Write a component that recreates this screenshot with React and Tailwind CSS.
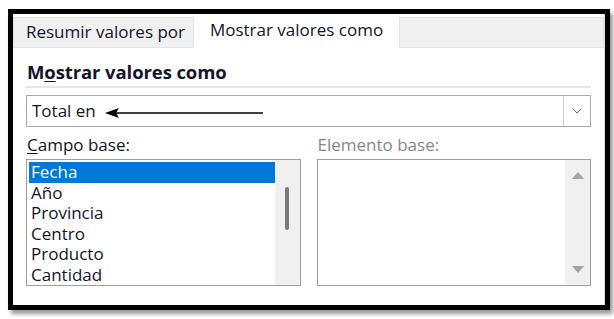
import { ChevronDown } from 'lucide-react'

const fields = ['Fecha', 'Año', 'Provincia', 'Centro', 'Producto', 'Cantidad']

function Arrow() {
  return (
    <svg className="absolute left-[78px] top-[11px]" width="160" height="12" viewBox="0 0 160 12">
      <polygon points="0,6 14,1 11,6 14,11" fill="#000" />
      <line x1="10" y1="6" x2="158" y2="6" stroke="#000" strokeWidth="1.6" />
    </svg>
  )
}

function ListBox({ items, arrows }) {
  return (
    <div className="flex h-[126px] flex-1 border border-[#a0a0a0] bg-white">
      <div className="flex flex-1 flex-col pl-[2px] pt-[2px]">
        {items.map((item, i) => (
          <div
            key={item}
            className={`h-[20.5px] pl-[2px] leading-[20.5px] ${
              i === 0 ? 'bg-[#0078d7] text-white' : 'text-[#14142b]'
            }`}
          >
            {item}
          </div>
        ))}
      </div>
      <div className="flex w-[25px] flex-col items-center justify-between bg-[#f0f0f0] py-[12px]">
        {arrows ? (
          <>
            <span className="h-0 w-0 border-x-[6px] border-b-[7px] border-x-transparent border-b-[#a3a3a3]" />
            <span className="h-0 w-0 border-x-[6px] border-t-[7px] border-x-transparent border-t-[#a3a3a3]" />
          </>
        ) : (
          <span className="mt-[15px] h-[43px] w-[4px] rounded-sm bg-[#7a7a7a]" />
        )}
      </div>
    </div>
  )
}

export default function App() {
  return (
    <div className="h-[319px] w-[614px] bg-white pl-[8px] pt-[9px] font-['Open_Sans',sans-serif] text-[17px] font-medium text-[#14142b]">
      <div className="flex h-[301px] w-[602px] flex-col border-[5px] border-black bg-white shadow-[3px_4px_4px_rgba(0,0,0,0.4)]">
        <div className="flex h-[34px] items-end border-r border-[#dcdcdc]">
          <div className="flex h-[31px] w-[181px] items-center justify-center border border-[#e3e3e3] bg-[#f0f0f0] pb-[1px] pl-[4px]">
            Resumir valores por
          </div>
          <div className="flex h-[34px] w-[205px] items-center justify-center bg-white pb-[2px]">
            Mostrar valores como
          </div>
          <div className="h-[31px] flex-1 border border-[#e3e3e3] bg-[#f0f0f0]" />
        </div>
        <div className="flex flex-1 flex-col border-r border-[#dcdcdc] px-[13px]">
          <div className="mt-[12px] h-[28px] border-b-2 border-[#e6e6e6] pl-[1px] text-[18.5px] leading-[24px] font-bold tracking-[-0.1px]">
            M<span className="underline underline-offset-2">o</span>strar valores como
          </div>
          <div className="relative mt-[7px] flex h-[32px] border border-[#ababab] bg-white">
            <div className="flex flex-1 items-center pl-[5px]">Total en</div>
            <Arrow />
            <div className="flex w-[27px] items-center justify-center border-l border-[#cfcfcf]">
              <ChevronDown size={16} strokeWidth={1.3} color="#555" />
            </div>
          </div>
          <div className="mt-[7px] flex gap-[16px]">
            <div className="flex flex-1 flex-col">
              <div className="h-[25px] pl-[1px] leading-[22px]">
                <span className="underline underline-offset-2">C</span>ampo base:
              </div>
              <ListBox items={fields} />
            </div>
            <div className="flex flex-1 flex-col">
              <div className="h-[25px] pl-[1px] leading-[22px] text-[#8f8585]">Elemento base:</div>
              <ListBox items={[]} arrows />
            </div>
          </div>
        </div>
      </div>
    </div>
  )
}
